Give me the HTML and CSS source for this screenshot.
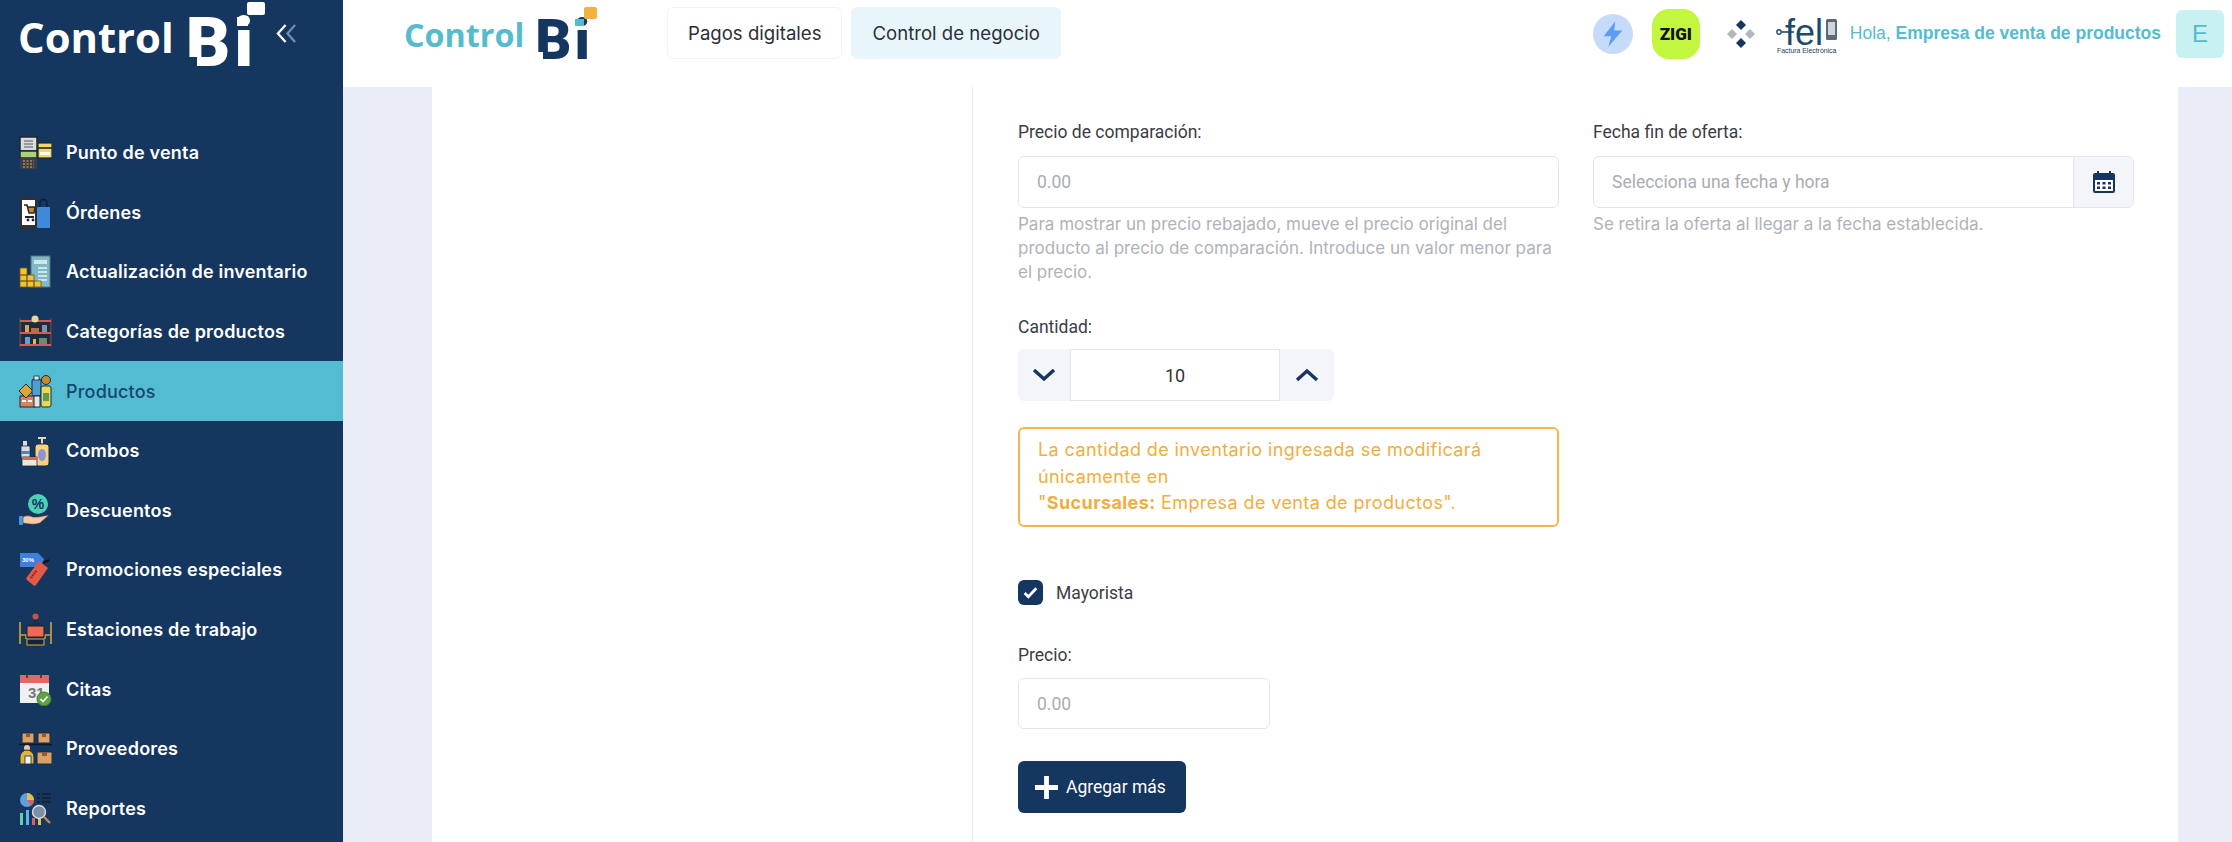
FILE: index.html
```html
<!DOCTYPE html>
<html lang="es">
<head>
<meta charset="utf-8">
<title>Control Bi</title>
<link rel="stylesheet" href="styles.css">
</head>
<body>
<div class="app">
  <aside class="sidebar">
    <div class="side-top">
      <div class="brand brand-light">
        <span class="brand-word">Control</span>
        <span class="brand-mark">Bi<i class="sq-big"></i><i class="sq-dot"></i><i class="notch"></i></span>
      </div>
      <svg class="collapse" viewBox="0 0 24 22" width="23" height="21"><path d="M11 2 3 11l8 9" fill="none" stroke="#fff" stroke-width="2.4"/><path d="M21 2l-8 9 8 9" fill="none" stroke="#6d8fb5" stroke-width="2.4"/></svg>
    </div>
    <nav class="nav">
      <a class="nav-item"><svg class="nav-icon" viewBox="0 0 33 33"><rect x="1" y="1" width="17" height="14" fill="#d9dde2" stroke="#23262b" stroke-width="1.5"/><path d="M5 5h9M5 8h9M5 11h9" stroke="#555" stroke-width="1.2"/><rect x="1" y="15" width="17" height="7" fill="#a8d47a" stroke="#23262b" stroke-width="1.5"/><rect x="1" y="22" width="17" height="11" rx="1" fill="#3b3f45"/><path d="M4 25h11M4 28h11M4 31h11" stroke="#b98a52" stroke-width="1.6" stroke-dasharray="2 1.5"/><rect x="19" y="7" width="14" height="15" fill="#f2d76b" stroke="#23262b" stroke-width="1.2"/><path d="M19 12h14" stroke="#23262b" stroke-width="1.6"/><rect x="21" y="16" width="10" height="3" fill="#fff"/></svg><span>Punto de venta</span></a>
      <a class="nav-item"><svg class="nav-icon" viewBox="0 0 33 33"><rect x="1" y="1" width="17" height="32" rx="2" fill="#2d3036"/><rect x="3" y="4" width="13" height="25" fill="#fff"/><path d="M5 9h3l2 8h5l1-6H9" fill="#c9893c" stroke="#23262b" stroke-width="1.4"/><path d="M6 21h9" stroke="#23262b" stroke-width="2"/><circle cx="9" cy="24" r="1.4" fill="#222"/><circle cx="14" cy="24" r="1.4" fill="#222"/><rect x="18" y="11" width="13" height="21" rx="1" fill="#3f8ad6"/><path d="M21 11V7a3.500 3.500 0 0 1 7 0v4" fill="none" stroke="#0d1f35" stroke-width="1.400"/></svg><span>Órdenes</span></a>
      <a class="nav-item"><svg class="nav-icon" viewBox="0 0 33 33"><rect x="12" y="1" width="19" height="31" fill="#7fb9c6" stroke="#55727a"/><rect x="15" y="5" width="13" height="4" fill="#cfe6ea"/><path d="M19 13h9M19 17h9M19 21h9M19 25h9" stroke="#e7f3f5" stroke-width="1.6"/><path d="M1 13h7v7H1zM1 20h7v6H1zM1 26h7v6H1zM8 20h7v6H8zM8 26h7v6H8zM15 26h7v6h-7z" fill="#f2c230" stroke="#6d561a" stroke-width=".8"/></svg><span>Actualización de inventario</span></a>
      <a class="nav-item"><svg class="nav-icon" viewBox="0 0 33 33"><rect x="3" y="5" width="27" height="25" fill="#1d2b3e"/><path d="M1 3v29M32 3v29" stroke="#7a3a3a" stroke-width="1.400"/><path d="M1 6h31M1 18h31M1 30h31" stroke="#d65a5a" stroke-width="2"/><circle cx="16" cy="4" r="3.500" fill="#e8d8a0"/><rect x="6" y="10" width="4" height="7" fill="#d9a648"/><rect x="12" y="13" width="8" height="4" fill="#b5723c"/><rect x="23" y="10" width="5" height="7" fill="#7c96a8"/><rect x="6" y="22" width="5" height="7" fill="#5fa0d8"/><rect x="14" y="24" width="3" height="5" fill="#e5b648"/><rect x="20" y="23" width="8" height="6" fill="#6b8a6b"/></svg><span>Categorías de productos</span></a>
      <a class="nav-item is-active"><svg class="nav-icon" viewBox="0 0 33 33"><rect x="1" y="21" width="15" height="11" fill="#d9835f" stroke="#1d2b3e"/><path d="M3 26h4M9 26h4" stroke="#fff" stroke-width="2"/><path d="M7 9l7 7-7 7-7-7z" fill="#e0a52c" stroke="#1d2b3e"/><rect x="13" y="4" width="9" height="17" rx="2" fill="#4d9fd4" stroke="#1d2b3e"/><rect x="15" y="1" width="5" height="4" fill="#dfe9f0" stroke="#1d2b3e" stroke-width=".8"/><rect x="15" y="21" width="6" height="11" fill="#e3e8ea" stroke="#1d2b3e"/><rect x="22" y="11" width="10" height="21" rx="2" fill="#e9d955" stroke="#1d2b3e"/><rect x="24" y="18" width="6" height="8" fill="#5e9a5e"/><circle cx="27" cy="5" r="4.500" fill="#c58d2a" stroke="#1d2b3e"/></svg><span>Productos</span></a>
      <a class="nav-item"><svg class="nav-icon" viewBox="0 0 33 33"><path d="M19 4h8M23 4v7" stroke="#e7d9b8" stroke-width="2"/><rect x="16" y="10" width="14" height="22" rx="3" fill="#f5d37a" stroke="#1d2b3e"/><ellipse cx="23" cy="21" rx="4" ry="6" fill="#8f92d8"/><rect x="4" y="7" width="4" height="5" fill="#d8dce0"/><rect x="2" y="12" width="9" height="12" rx="1" fill="#d6dde4" stroke="#1d2b3e" stroke-width=".8"/><rect x="2" y="17" width="9" height="3" fill="#5c7fa5"/><rect x="3" y="23" width="15" height="9" fill="#f1e6dc" stroke="#1d2b3e" stroke-width=".8"/><rect x="3" y="23" width="15" height="3" fill="#d9655f"/></svg><span>Combos</span></a>
      <a class="nav-item"><svg class="nav-icon" viewBox="0 0 33 33"><circle cx="19" cy="10" r="10" fill="#4dd0b5"/><text x="19" y="15" class="pct">%</text><rect x="0" y="22" width="4" height="9" rx="1" fill="#3f9ee0"/><path d="M4 23c4-2 7-1 10 0h5l11-2-9 8c-6 2-11 1-17 0z" fill="#f5c9a8" stroke="#4a3a38" stroke-width=".6"/></svg><span>Descuentos</span></a>
      <a class="nav-item"><svg class="nav-icon" viewBox="0 0 33 33"><path d="M1 0h18l6 6-3 8H1z" fill="#3f7fdc"/><text x="3" y="9" class="tiny-tag">30%</text><path d="M20 8l9 7-12 17c-1 1-2 1-3 0l-6-5c-1-1-1-2 0-3z" fill="#e35a48"/><path d="M24 10l6-3" stroke="#111" stroke-width="2"/><path d="M12 25l6-8" stroke="#8d2a20" stroke-width="2.500" stroke-dasharray="1.500 1"/></svg><span>Promociones especiales</span></a>
      <a class="nav-item"><svg class="nav-icon" viewBox="0 0 33 33"><path d="M1 9v22M32 9v22" stroke="#d8ad3c" stroke-width="1.500"/><path d="M1 22h6v4M32 22h-6v4" fill="none" stroke="#c9a13a" stroke-width="1.500"/><rect x="8" y="13" width="17" height="11" fill="#ee6a58" stroke="#1d1d1d"/><path d="M16.500 5v8M16.500 7l-5 6M16.500 7l5 6" stroke="#1d2b3e" stroke-width="1.200"/><circle cx="16.500" cy="3.500" r="3" fill="#c94f4f"/><rect x="8" y="26" width="17" height="6" fill="#15233a" stroke="#d8ad3c"/></svg><span>Estaciones de trabajo</span></a>
      <a class="nav-item"><svg class="nav-icon" viewBox="0 0 33 33"><rect x="1" y="2" width="29" height="28" fill="#eef0f2"/><rect x="1" y="2" width="29" height="8" fill="#e06a62"/><path d="M8 0v5M22 0v5" stroke="#4a2a2a" stroke-width="1.600"/><text x="9" y="25" class="cal-num">31</text><circle cx="25" cy="26" r="7" fill="#5fa347" stroke="#3e7a2e"/><path d="M21.500 26l2.500 2.500 4.500-5" fill="none" stroke="#fff" stroke-width="1.600"/></svg><span>Citas</span></a>
      <a class="nav-item"><svg class="nav-icon" viewBox="0 0 33 33"><rect x="3" y="1" width="12" height="10" fill="#d9a168" stroke="#1d2b3e"/><rect x="19" y="1" width="12" height="10" fill="#d9a168" stroke="#1d2b3e"/><path d="M7 1v4h4V1M23 1v4h4V1" fill="#8c5f33"/><path d="M0 12.500h33" stroke="#0c1a2c" stroke-width="1.400"/><circle cx="8" cy="16" r="3" fill="#f0c9a0"/><path d="M1 32v-7a7 7 0 0 1 14 0v7z" fill="#e0b53c" stroke="#1d2b3e"/><rect x="6" y="24" width="6" height="8" fill="#f2f2f2" stroke="#1d2b3e" stroke-width=".8"/><rect x="18" y="20" width="15" height="12" rx="1" fill="#d9a168" stroke="#1d2b3e"/><path d="M23 20v4h5v-4" fill="#8c5f33"/></svg><span>Proveedores</span></a>
      <a class="nav-item"><svg class="nav-icon" viewBox="0 0 33 33"><circle cx="8" cy="8" r="7" fill="#5f9ee0"/><path d="M8 8V1a7 7 0 0 1 7 7z" fill="#e0c04c"/><path d="M8 8h7a7 7 0 0 1-3 5.700z" fill="#d9605a"/><path d="M18 2h3M23 2h9M18 6h3M23 6h9M18 10h3M23 10h9" stroke="#16202e" stroke-width="1.600"/><rect x="1" y="21" width="3" height="12" fill="#5fd0b0"/><rect x="7" y="18" width="3" height="15" fill="#6ab0e8"/><rect x="13" y="26" width="3" height="7" fill="#e0605a"/><rect x="19" y="27" width="3" height="6" fill="#e0c04c"/><circle cx="20" cy="20" r="6.500" fill="#7b8fa8" stroke="#ddd" stroke-width="1.400"/><path d="M25 25l6 6" stroke="#c98a5a" stroke-width="2.400"/></svg><span>Reportes</span></a>
    </nav>
  </aside>
  <div class="main">
    <header class="topbar">
      <div class="brand brand-color">
        <span class="brand-word">Control</span>
        <span class="brand-mark">Bi<i class="sq-big"></i><i class="sq-dot"></i><i class="notch"></i></span>
      </div>
      <div class="tabs">
        <a class="tab">Pagos digitales</a>
        <a class="tab tab-on">Control de negocio</a>
      </div>
      <div class="top-right">
        <span class="bolt"><svg viewBox="0 0 24 24" width="28" height="28"><path d="M14 1 4 14h6.500L8 23l12-14h-7z" fill="#5b9cf5"/></svg></span>
        <span class="zigi">ZIGI</span>
        <svg class="diamonds" viewBox="0 0 28 28" width="28" height="28"><path d="M14 0l5 5-5 5-5-5z" fill="#14365f"/><path d="M14 18l5 5-5 5-5-5z" fill="#14365f"/><path d="M5 9l5 5-5 5-5-5z" fill="#b2b6bd"/><path d="M23 9l5 5-5 5-5-5z" fill="#b2b6bd"/></svg>
        <svg class="fel" viewBox="0 0 62 44" width="62" height="44"><circle cx="3" cy="20" r="2.200" fill="none" stroke="#1c4a6e" stroke-width="1.400"/><path d="M5 20h13" stroke="#1c4a6e" stroke-width="1.600"/><text x="9" y="33" class="fel-word">fel</text><rect x="50" y="7" width="11" height="21" rx="1.500" fill="#5c6b76"/><rect x="52" y="10" width="7" height="13" fill="#cfd5d9"/><text x="1" y="41" class="fel-sub">Factura Electrónica</text></svg>
        <span class="hello">Hola, <b>Empresa de venta de productos</b></span>
        <span class="avatar">E</span>
      </div>
    </header>
    <div class="content">
      <section class="card">
        <div class="card-left"></div>
        <div class="form">
          <div class="col">
            <label class="label">Precio de comparación:</label>
            <div class="input"><span class="ph">0.00</span></div>
            <p class="help help-wide">Para mostrar un precio rebajado, mueve el precio original del producto al precio de comparación. Introduce un valor menor para el precio.</p>
            <label class="label label-qty">Cantidad:</label>
            <div class="stepper">
              <span class="step"><svg viewBox="0 0 24 14" width="24" height="14"><path d="M2 2l10 9 10-9" fill="none" stroke="#14365f" stroke-width="3.400"/></svg></span>
              <span class="qty">10</span>
              <span class="step"><svg viewBox="0 0 24 14" width="24" height="14"><path d="M2 12l10-9 10 9" fill="none" stroke="#14365f" stroke-width="3.400"/></svg></span>
            </div>
            <div class="alert">La cantidad de inventario ingresada se modificará únicamente en<br>"<b>Sucursales:</b> Empresa de venta de productos".</div>
            <div class="check-row">
              <span class="check"><svg viewBox="0 0 16 16" width="17" height="17"><path d="M2.500 8.500l3.500 3.500 7.500-8" fill="none" stroke="#fff" stroke-width="2.500"/></svg></span>
              <span class="check-label">Mayorista</span>
            </div>
            <label class="label label-price">Precio:</label>
            <div class="input input-short"><span class="ph">0.00</span></div>
            <button class="add"><svg viewBox="0 0 22 22" width="23" height="23"><path d="M11 0v22M0 11h22" stroke="#fff" stroke-width="4.600"/></svg><span>Agregar más</span></button>
          </div>
          <div class="col">
            <label class="label">Fecha fin de oferta:</label>
            <div class="input input-group">
              <span class="ph">Selecciona una fecha y hora</span>
              <span class="addon"><svg viewBox="0 0 24 24" width="24" height="24"><path d="M6 1v4M18 1v4" stroke="#14365f" stroke-width="2"/><path d="M1 5a2 2 0 0 1 2-2h18a2 2 0 0 1 2 2v5H1z" fill="#14365f"/><path d="M2 9h20v12a1 1 0 0 1-1 1H3a1 1 0 0 1-1-1z" fill="#fff" stroke="#14365f" stroke-width="2"/><path d="M5 12h3v2.500H5zM10.500 12h3v2.500h-3zM16 12h3v2.500h-3zM5 16.500h3V19H5zM10.500 16.500h3V19h-3zM16 16.500h3V19h-3z" fill="#14365f"/></svg></span>
            </div>
            <p class="help">Se retira la oferta al llegar a la fecha establecida.</p>
          </div>
        </div>
      </section>
    </div>
  </div>
</div>
</body>
</html>
```
FILE: styles.css
```css
* { box-sizing: border-box; }
html, body { margin: 0; height: 100%; }
body { font-family: "Liberation Sans", Arial, sans-serif; overflow: hidden; background: #fff; }
.app { display: flex; width: 2232px; height: 842px; overflow: hidden; }

.sidebar { width: 343px; flex: none; background: #14365f; }
.side-top { height: 123px; display: flex; align-items: flex-start; padding-left: 18px; }
.collapse { margin: 23px 0 0 24px; }

.brand { display: flex; align-items: flex-start; }
.brand-word { font-family: "Open Sans", sans-serif; font-weight: 700; display: block; }
.brand-mark { position: relative; display: block; font-family: Roboto, sans-serif; font-weight: 900; }
.brand-mark i { position: absolute; display: block; }

.brand-light { width: 233px; height: 87px; color: #fff; }
.brand-light .brand-word { font-size: 41.8px; line-height: 50px; margin-top: 12px; }
.brand-light .brand-mark { font-size: 69px; line-height: 81px; margin: 2px 0 0 12px; letter-spacing: 4px; }
.brand-light .sq-big { left: 61px; top: 0; width: 18px; height: 13px; background: #fff; border-radius: 2px; }
.brand-light .sq-dot { left: 51px; top: 15px; width: 11px; height: 9px; background: #fff; }
.brand-light .notch { left: 0; top: 55px; width: 11px; height: 9px; background: #14365f; }

.brand-color { width: 193px; color: #55bcd0; }
.brand-color .brand-word { font-size: 32.300px; line-height: 40px; margin-top: 14px; }
.brand-color .brand-mark { font-size: 56px; line-height: 66px; margin: 7px 0 0 11px; color: #14365f; letter-spacing: 3px; }
.brand-color .sq-big { left: 49px; top: 0; width: 13px; height: 12px; background: #f2b33d; border-radius: 2px; }
.brand-color .sq-dot { left: 40px; top: 12px; width: 9px; height: 7px; background: #55bcd0; }
.brand-color .notch { left: 0; top: 45px; width: 8px; height: 7px; background: #fff; }

.nav { display: flex; flex-direction: column; }
.nav-item { display: flex; align-items: center; height: 59.6px; padding-left: 19px; color: #fff; font-family: Inter, sans-serif; font-weight: 600; font-size: 18px; letter-spacing: .2px; }
.nav-item.is-active { background: #54bcd2; color: #14466f; font-weight: 500; }
.nav-icon { width: 33px; height: 33px; flex: none; margin-right: 14px; }
.pct { font: 700 14px "Liberation Sans", sans-serif; fill: #14365f; text-anchor: middle; letter-spacing: 0; }
.tiny-tag { font: 700 6px "Liberation Sans", sans-serif; fill: #fff; letter-spacing: 0; }
.cal-num { font: 700 15px "Liberation Sans", sans-serif; fill: #777; letter-spacing: 0; }

.main { flex: 1; min-width: 0; display: flex; flex-direction: column; }
.topbar { height: 87px; flex: none; display: flex; align-items: flex-start; padding-left: 61px; background: #fff; }
.tabs { display: flex; gap: 9px; margin: 7px 0 0 70px; }
.tab { display: flex; align-items: center; height: 52px; padding: 0 20px; border: 1px solid #f1f3f6; border-radius: 6px; font-family: Inter, sans-serif; font-size: 18.600px; color: #2b2f36; }
.tab-on { background: #e8f6fb; border-color: #e8f6fb; }

.top-right { display: flex; align-items: center; margin-left: auto; height: 67px; padding-right: 8px; }
.bolt { width: 40px; height: 40px; border-radius: 50%; background: #c6dbfa; display: flex; align-items: center; justify-content: center; }
.zigi { width: 48px; height: 50px; margin-left: 19px; border-radius: 17px; background: #c2f63f; display: flex; align-items: center; justify-content: center; font: 900 17px Roboto, sans-serif; color: #111; }
.diamonds { margin-left: 27px; }
.fel { margin-left: 21px; }
.fel-word { font: 400 36px "Liberation Sans", sans-serif; fill: #1c4a6e; }
.fel-sub { font: 400 6.900px "Liberation Sans", sans-serif; fill: #1c3a55; }
.hello { margin-left: 12px; font-size: 17.500px; color: #55bcd0; white-space: nowrap; }
.hello b { font-weight: 700; }
.avatar { width: 48px; height: 48px; margin-left: 15px; border-radius: 6px; background: #c9f1f1; color: #55bcd0; display: flex; align-items: center; justify-content: center; font-size: 24px; }

.content { flex: 1; min-height: 0; overflow: hidden; background: #e9edf5; padding: 0 54px 0 89px; }
.card { display: flex; height: 100%; background: #fff; }
.card-left { width: 541px; flex: none; border-right: 1px solid #e9ebef; }
.form { flex: 1; display: grid; grid-template-columns: 541px 541px; gap: 34px; padding: 34px 0 0 45px; align-items: start; }
.col { display: flex; flex-direction: column; align-items: flex-start; }

.label { display: block; font-family: Roboto, sans-serif; font-size: 17.500px; line-height: 22px; color: #3a3d44; margin-bottom: 13px; }
.input { width: 100%; height: 52px; border: 1px solid #e4e6ea; border-radius: 6px; display: flex; align-items: center; padding-left: 18px; background: #fff; }
.ph { font-family: Roboto, sans-serif; font-size: 17.500px; color: #a9acb3; }
.input-short { width: 252px; height: 51px; }
.input-group { padding-left: 0; overflow: hidden; }
.input-group .ph { flex: 1; padding-left: 18px; }
.addon { width: 60px; height: 100%; flex: none; display: flex; align-items: center; justify-content: center; background: #f3f5f8; border-left: 1px solid #e4e6ea; }
.help { margin: 4px 0 0; font-family: Inter, sans-serif; font-size: 17px; line-height: 24px; color: #b0b2bb; }
.help-wide { width: 540px; }

.label-qty { margin-top: 32px; margin-bottom: 11px; }
.stepper { display: flex; height: 52px; width: 316px; }
.step { width: 52px; flex: none; display: flex; align-items: center; justify-content: center; background: #f3f5f8; border-radius: 6px 0 0 6px; }
.step:last-child { border-radius: 0 6px 6px 0; width: 54px; }
.qty { flex: 1; display: flex; align-items: center; justify-content: center; border: 1px solid #e4e6ea; font-family: Roboto, sans-serif; font-size: 18px; color: #333; }

.alert { width: 100%; margin-top: 26px; height: 100px; padding: 8px 18px; border: 2px solid #f2b64a; border-radius: 6px; font-family: Inter, sans-serif; font-size: 18px; letter-spacing: .4px; line-height: 26.500px; color: #f0ae3c; }
.alert b { font-weight: 700; }

.check-row { display: flex; align-items: center; margin-top: 53px; height: 25px; }
.check { width: 25px; height: 25px; border-radius: 6px; background: #14365f; display: flex; align-items: center; justify-content: center; }
.check-label { margin-left: 13px; font-family: Roboto, sans-serif; font-size: 17.500px; color: #3a3d44; }

.label-price { margin-top: 39px; margin-bottom: 12px; }
.add { display: flex; align-items: center; margin-top: 32px; width: 168px; height: 52px; padding: 0 0 0 17px; border: 0; border-radius: 6px; background: #14365f; color: #fff; font-family: Roboto, sans-serif; font-size: 17.500px; }
.add span { margin-left: 8px; }
```
